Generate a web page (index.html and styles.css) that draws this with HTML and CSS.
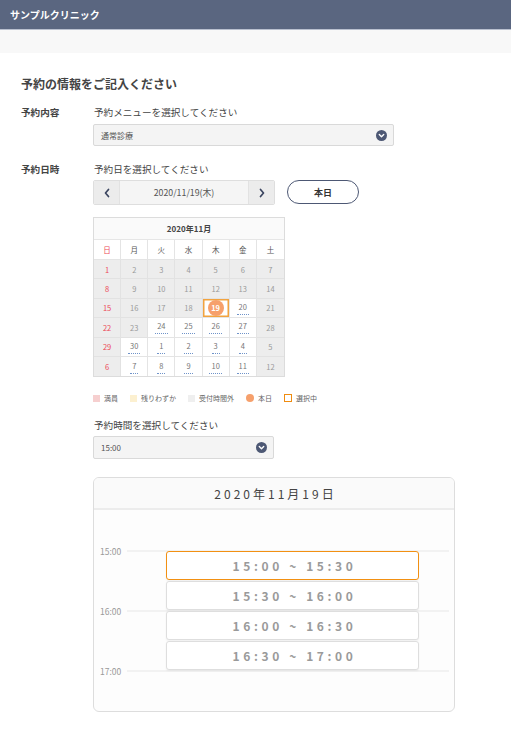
FILE: index.html
```html
<!DOCTYPE html>
<html lang="ja">
<head>
<meta charset="utf-8">
<title>サンプルクリニック</title>
<link rel="stylesheet" href="styles.css">
</head>
<body>
<div class="page">
  <header class="topbar">サンプルクリニック</header>
  <div class="band"></div>
  <main class="content">
    <h1 class="title">予約の情報をご記入ください</h1>

    <section class="row">
      <div class="label">予約内容</div>
      <div class="field">
        <div class="hint">予約メニューを選択してください</div>
        <div class="select select-wide">
          <span>通常診療</span>
          <span class="chev"><svg viewBox="0 0 12 12" width="11" height="11"><circle cx="6" cy="6" r="6" fill="#4d5874"/><path d="M3.6 5 L6 7.3 L8.4 5" fill="none" stroke="#fff" stroke-width="1.5" stroke-linecap="round" stroke-linejoin="round"/></svg></span>
        </div>
      </div>
    </section>

    <section class="row row-date">
      <div class="label">予約日時</div>
      <div class="field">
        <div class="hint">予約日を選択してください</div>
        <div class="datebar">
          <div class="datenav">
            <div class="navbtn"><svg viewBox="0 0 8 10" width="8" height="10"><path d="M5.5 1.5 L2.5 5 L5.5 8.5" fill="none" stroke="#3b4560" stroke-width="1.7" stroke-linecap="round" stroke-linejoin="round"/></svg></div>
            <div class="curdate">2020/11/19(木)</div>
            <div class="navbtn"><svg viewBox="0 0 8 10" width="8" height="10"><path d="M2.5 1.5 L5.5 5 L2.5 8.5" fill="none" stroke="#3b4560" stroke-width="1.7" stroke-linecap="round" stroke-linejoin="round"/></svg></div>
          </div>
          <div class="todaybtn">本日</div>
        </div>

        <div class="cal">
          <div class="cal-title">2020年11月</div>
          <div class="cal-grid">
            <div class="dn sun">日</div><div class="dn">月</div><div class="dn">火</div><div class="dn">水</div><div class="dn">木</div><div class="dn">金</div><div class="dn last">土</div>

            <div class="d off sun">1</div><div class="d off">2</div><div class="d off">3</div><div class="d off">4</div><div class="d off">5</div><div class="d off">6</div><div class="d off last">7</div>
            <div class="d off sun">8</div><div class="d off">9</div><div class="d off">10</div><div class="d off">11</div><div class="d off">12</div><div class="d off">13</div><div class="d off last">14</div>
            <div class="d off sun">15</div><div class="d off">16</div><div class="d off">17</div><div class="d off">18</div><div class="d sel"><span class="today-dot">19</span></div><div class="d ok"><span class="n">20</span></div><div class="d off last">21</div>
            <div class="d off sun">22</div><div class="d off">23</div><div class="d ok"><span class="n">24</span></div><div class="d ok"><span class="n">25</span></div><div class="d ok"><span class="n">26</span></div><div class="d ok"><span class="n">27</span></div><div class="d off last">28</div>
            <div class="d off sun">29</div><div class="d ok"><span class="n">30</span></div><div class="d ok"><span class="n">1</span></div><div class="d ok"><span class="n">2</span></div><div class="d ok"><span class="n">3</span></div><div class="d ok"><span class="n">4</span></div><div class="d off last">5</div>
            <div class="d off sun bottom">6</div><div class="d ok bottom"><span class="n">7</span></div><div class="d ok bottom"><span class="n">8</span></div><div class="d ok bottom"><span class="n">9</span></div><div class="d ok bottom"><span class="n">10</span></div><div class="d ok bottom"><span class="n">11</span></div><div class="d off last bottom">12</div>
          </div>
        </div>

        <div class="legend">
          <span class="lg"><i class="sw sw-full"></i>満員</span>
          <span class="lg"><i class="sw sw-few"></i>残りわずか</span>
          <span class="lg"><i class="sw sw-out"></i>受付時間外</span>
          <span class="lg"><i class="sw sw-today"></i>本日</span>
          <span class="lg"><i class="sw sw-sel"></i>選択中</span>
        </div>

        <div class="hint hint-time">予約時間を選択してください</div>
        <div class="select select-time">
          <span>15:00</span>
          <span class="chev"><svg viewBox="0 0 12 12" width="11" height="11"><circle cx="6" cy="6" r="6" fill="#4d5874"/><path d="M3.6 5 L6 7.3 L8.4 5" fill="none" stroke="#fff" stroke-width="1.5" stroke-linecap="round" stroke-linejoin="round"/></svg></span>
        </div>

        <div class="sched">
          <div class="sched-head">2020年11月19日</div>
          <div class="timeline">
            <div class="hour h15"></div>
            <div class="tlabel t15">15:00</div>
            <div class="hour h16"></div>
            <div class="tlabel t16">16:00</div>
            <div class="hour h17"></div>
            <div class="tlabel t17">17:00</div>
            <div class="slot s1 active">15:00 ~ 15:30</div>
            <div class="slot s2">15:30 ~ 16:00</div>
            <div class="slot s3">16:00 ~ 16:30</div>
            <div class="slot s4">16:30 ~ 17:00</div>
          </div>
        </div>
      </div>
    </section>
  </main>
</div>
</body>
</html>
```

FILE: styles.css
```css
* { box-sizing: border-box; }
html, body { margin: 0; padding: 0; background: #fff; }
body {
  font-family: "Noto Sans CJK JP", "Noto Sans", sans-serif;
  color: #444;
}
.page { width: 511px; }

.topbar {
  height: 30px;
  background: #5a6680;
  border-bottom: 1px solid #b9c0cf;
  color: #fff;
  font-weight: bold;
  font-size: 10px;
  line-height: 29px;
  padding-left: 10px;
}
.band { height: 23px; background: #f8f8f8; }

.content { padding: 23px 0 40px 21px; }
.title {
  margin: 0 0 13px;
  font-size: 12px;
  line-height: 16px;
  font-weight: bold;
  color: #444;
}

.row { display: flex; }
.row-date { margin-top: 16px; }
.label {
  width: 72px;
  flex: none;
  font-size: 9.6px;
  line-height: 14px;
  font-weight: bold;
  color: #444;
}
.field { flex: none; width: 362px; }
.hint {
  font-size: 9.6px;
  line-height: 14px;
  color: #444;
  padding-left: 1px;
  margin-bottom: 5px;
}

.select {
  display: flex;
  align-items: center;
  justify-content: space-between;
  height: 22px;
  border: 1px solid #d9d9d9;
  border-radius: 2px;
  background: #f4f4f4;
  font-size: 8px;
  color: #555;
  padding: 0 6px 0 7px;
}
.select-wide { width: 301px; }
.select-time { width: 181px; height: 23px; margin-top: 0; }
.chev { display: flex; }

.datebar { display: flex; align-items: flex-start; margin-top: -1px; }
.datenav {
  display: flex;
  width: 182px;
  height: 25px;
  border: 1px solid #dedede;
  border-radius: 2px;
  overflow: hidden;
}
.navbtn {
  width: 25px;
  flex: none;
  background: #ececec;
  display: flex;
  align-items: center;
  justify-content: center;
}
.curdate {
  flex: 1;
  background: #f5f5f5;
  border-left: 1px solid #e2e2e2;
  border-right: 1px solid #e2e2e2;
  font-size: 8.8px;
  color: #555;
  display: flex;
  align-items: center;
  justify-content: center;
}
.todaybtn {
  margin-left: 12px;
  width: 72px;
  height: 24px;
  border: 1px solid #4d5874;
  border-radius: 12px;
  font-size: 9px;
  font-weight: bold;
  color: #333;
  display: flex;
  align-items: center;
  justify-content: center;
}

.cal {
  margin-top: 12px;
  width: 192px;
  border: 1px solid #dcdcdc;
}
.cal-title {
  height: 22px;
  background: #fafafa;
  border-bottom: 1px solid #e6e6e6;
  font-size: 8px;
  font-weight: bold;
  color: #444;
  display: flex;
  align-items: center;
  justify-content: center;
}
.cal-grid {
  display: grid;
  grid-template-columns: repeat(7, 1fr);
  grid-template-rows: 20px repeat(6, 19.4px);
}
.dn, .d {
  border-right: 1px solid #e4e4e4;
  border-bottom: 1px solid #e4e4e4;
  display: flex;
  align-items: center;
  justify-content: center;
  font-size: 7.5px;
}
.last { border-right: none; }
.bottom { border-bottom: none; }
.dn { background: #fff; color: #555; }
.d.off { background: #ededed; color: #9a9a9a; border-color: #e2e2e2; }
.d.ok { background: #fff; color: #777; }
.sun { color: #ec4a58 !important; }
.n {
  display: inline-block;
  line-height: 9px;
  padding: 0 2px 3px;
  border-bottom: 1px dotted #6f93c9;
  margin-top: 1px;
}
.d.sel {
  background: #fff;
  box-shadow: inset 0 0 0 1.5px #f2a33f;
}
.today-dot {
  width: 16px;
  height: 16px;
  border-radius: 50%;
  background: #f6a06c;
  color: #fff;
  font-weight: bold;
  display: flex;
  align-items: center;
  justify-content: center;
  font-size: 7.5px;
}

.legend {
  display: flex;
  gap: 12px;
  margin-top: 16px;
  height: 10px;
  align-items: center;
  font-size: 7px;
  color: #666;
}
.lg { display: flex; align-items: center; gap: 4px; }
.sw { display: inline-block; width: 7px; height: 7px; }
.sw-full { background: #f6cfcf; }
.sw-few { background: #fcf0d0; }
.sw-out { background: #efefef; }
.sw-today { width: 8px; height: 8px; border-radius: 50%; background: #f6a06c; }
.sw-sel { border: 1.5px solid #f08c10; width: 8px; height: 8px; }

.hint-time { margin-top: 15px; margin-bottom: 4px; }

.sched {
  margin-top: 18px;
  width: 362px;
  border: 1px solid #dddddd;
  border-radius: 6px;
  background: #fdfdfd;
  overflow: hidden;
}
.sched-head {
  height: 32px;
  background: #fafafa;
  border-bottom: 2px solid #ececec;
  font-size: 12px;
  letter-spacing: 3px;
  color: #444;
  display: flex;
  align-items: center;
  justify-content: center;
  padding-left: 3px;
}
.timeline {
  display: grid;
  grid-template-columns: 33px 39px 253px 30px;
  grid-template-rows: repeat(4, 30px) 40px;
  padding-top: 41px;
}
.hour {
  grid-column: 2 / 5;
  border-top: 2px solid #f2f2f2;
  margin-top: -1px;
}
.h15 { grid-row: 1 / 3; }
.h16 { grid-row: 3 / 5; }
.h17 { grid-row: 5 / 6; }
.tlabel {
  grid-column: 1;
  font-size: 8.5px;
  color: #999;
  padding-left: 6px;
  line-height: 10px;
  margin-top: -5px;
}
.t15 { grid-row: 1; }
.t16 { grid-row: 3; }
.t17 { grid-row: 5; }
.slot {
  grid-column: 3;
  height: 29px;
  background: #fff;
  border: 1px solid #dedede;
  border-radius: 3px;
  box-shadow: 0 1px 2px rgba(0,0,0,0.06);
  font-size: 12px;
  font-weight: bold;
  letter-spacing: 3.6px;
  color: #9a9a9a;
  display: flex;
  align-items: center;
  justify-content: center;
  padding-left: 4px;
  z-index: 1;
}
.slot.active { border-color: #f29012; }
.s1 { grid-row: 1; }
.s2 { grid-row: 2; }
.s3 { grid-row: 3; }
.s4 { grid-row: 4; }
```
